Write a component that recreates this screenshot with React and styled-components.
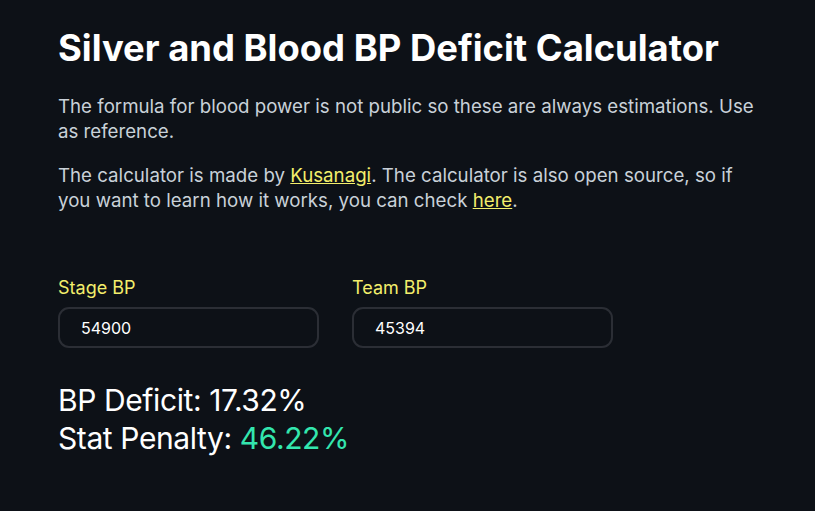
import React, { useState } from 'react';
import styled, { createGlobalStyle } from 'styled-components';

const GlobalStyle = createGlobalStyle`
  html, body {
    margin: 0;
    background: #0d1117;
  }
  body {
    font-family: Inter, "Noto Sans", sans-serif;
    color: #c9d1d9;
  }
`;

const Page = styled.main`
  min-height: 511px;
  padding: 23px 40px 23px 58px;
  box-sizing: border-box;
`;

const Title = styled.h1`
  margin: 0 0 21px;
  font-size: 36.4px;
  line-height: 50px;
  font-weight: 700;
  color: #ffffff;
`;

const Text = styled.p`
  margin: 0 0 19px;
  font-size: 18.7px;
  line-height: 25px;
  max-width: 704px;
  color: #c9d1d9;
`;

const Link = styled.a`
  color: #f3ee6b;
  text-decoration: underline;
`;

const Fields = styled.div`
  display: flex;
  gap: 33px;
  margin-top: 63px;
`;

const Field = styled.label`
  display: flex;
  flex-direction: column;
  gap: 7px;
  width: 261px;
`;

const Label = styled.span`
  font-size: 18px;
  line-height: 24px;
  color: #f3ee6b;
`;

const Input = styled.input`
  box-sizing: border-box;
  height: 41px;
  width: 100%;
  padding: 0 21px;
  background: #0d1117;
  border: 2px solid #2b2e35;
  border-radius: 11px;
  color: #ffffff;
  font-family: inherit;
  font-size: 16px;
  outline: none;
`;

const Results = styled.div`
  margin-top: 33px;
  display: flex;
  flex-direction: column;
`;

const Result = styled.div`
  font-size: 30px;
  line-height: 38px;
  color: #ffffff;
  letter-spacing: -0.4px;
`;

const Value = styled.span`
  color: ${p => (p.$accent ? '#33e6ae' : '#ffffff')};
`;

export default function App() {
  const [stage, setStage] = useState('54900');
  const [team, setTeam] = useState('45394');

  const s = parseFloat(stage) || 0;
  const t = parseFloat(team) || 0;
  const deficit = s > 0 ? ((s - t) / s) * 100 : 0;

  return (
    <>
      <GlobalStyle />
      <Page>
        <Title>Silver and Blood BP Deficit Calculator</Title>
        <Text>
          The formula for blood power is not public so these are always estimations. Use
          as reference.
        </Text>
        <Text>
          The calculator is made by <Link href="#">Kusanagi</Link>. The calculator is also open source, so if
          you want to learn how it works, you can check <Link href="#">here</Link>.
        </Text>
        <Fields>
          <Field>
            <Label>Stage BP</Label>
            <Input value={stage} onChange={e => setStage(e.target.value)} />
          </Field>
          <Field>
            <Label>Team BP</Label>
            <Input value={team} onChange={e => setTeam(e.target.value)} />
          </Field>
        </Fields>
        <Results>
          <Result>BP Deficit: <Value>{deficit.toFixed(2)}%</Value></Result>
          <Result>Stat Penalty: <Value $accent>46.22%</Value></Result>
        </Results>
      </Page>
    </>
  );
}
